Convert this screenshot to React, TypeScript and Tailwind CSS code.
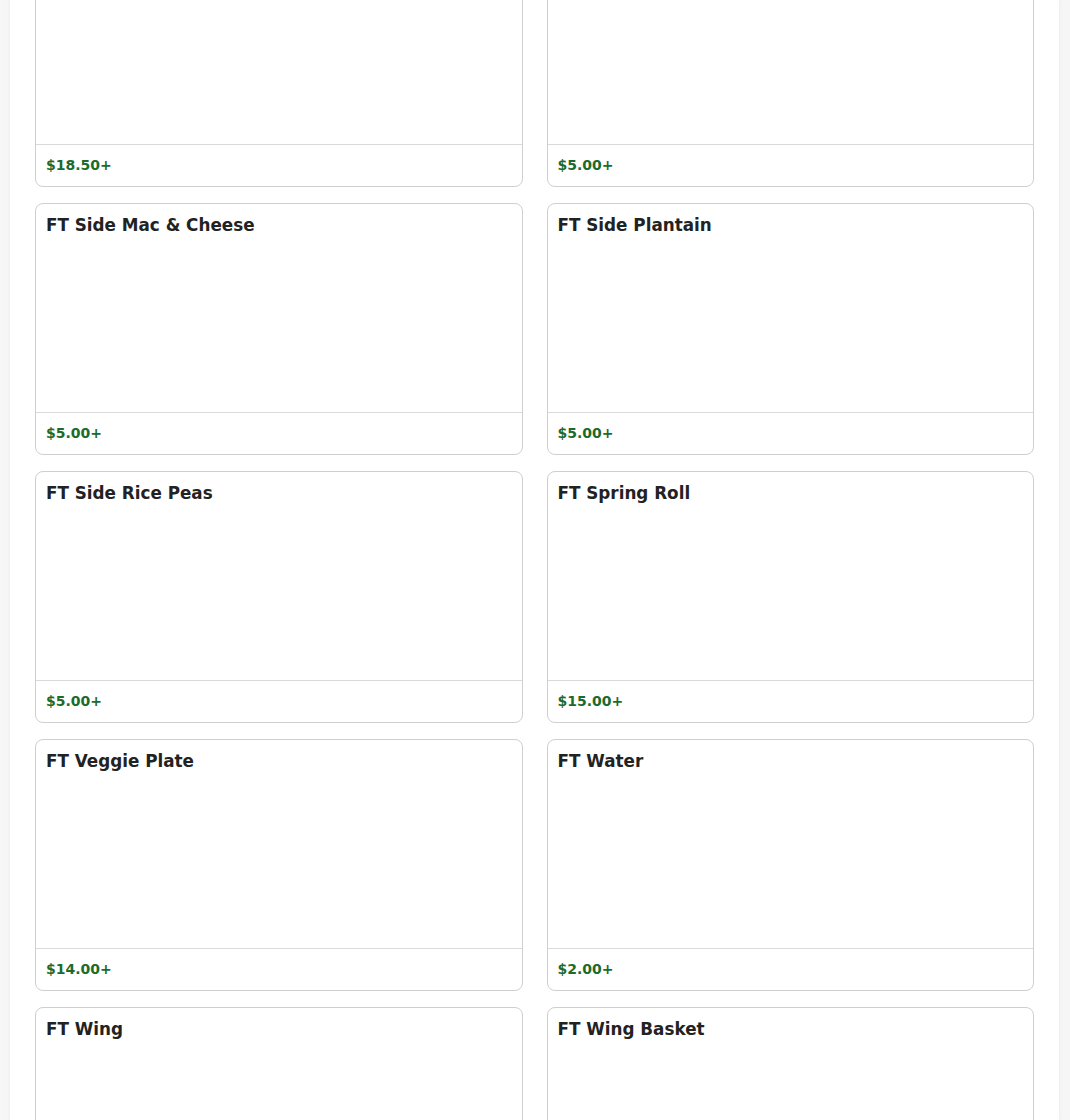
import React from "react";

const items = [
  { name: "", price: "$18.50+" },
  { name: "", price: "$5.00+" },
  { name: "FT Side Mac & Cheese", price: "$5.00+" },
  { name: "FT Side Plantain", price: "$5.00+" },
  { name: "FT Side Rice Peas", price: "$5.00+" },
  { name: "FT Spring Roll", price: "$15.00+" },
  { name: "FT Veggie Plate", price: "$14.00+" },
  { name: "FT Water", price: "$2.00+" },
  { name: "FT Wing", price: "$12.00+" },
  { name: "FT Wing Basket", price: "$15.00+" },
];

function Card({ name, price }: { name: string; price: string }) {
  return (
    <div className="flex h-[252px] flex-col overflow-hidden rounded-[8px] border border-[#cfcfcf] bg-white">
      <div className="flex-1 px-[10px] pt-[8px]">
        <div className="text-[16.8px] font-bold leading-[26px] text-[#222]">{name}</div>
      </div>
      <div className="border-t border-[#d9d9d9] px-[10px] pt-[10px] pb-[11px] text-[14px] font-bold leading-[20px] text-[#1c6b2b]">
        {price}
      </div>
    </div>
  );
}

export default function App() {
  return (
    <div
      className="h-[1120px] overflow-hidden bg-[#f6f6f6]"
      style={{ fontFamily: '"DejaVu Sans", "Liberation Sans", sans-serif' }}
    >
      <div className="ml-[10px] h-full w-[1049px] overflow-hidden bg-white px-[25px] shadow-[0_0_4px_rgba(0,0,0,0.06)]">
        <div className="-mt-[65px] grid grid-cols-2 gap-x-[24px] gap-y-[16px]">
          {items.map((it, i) => (
            <Card key={i} name={it.name} price={it.price} />
          ))}
        </div>
      </div>
    </div>
  );
}
